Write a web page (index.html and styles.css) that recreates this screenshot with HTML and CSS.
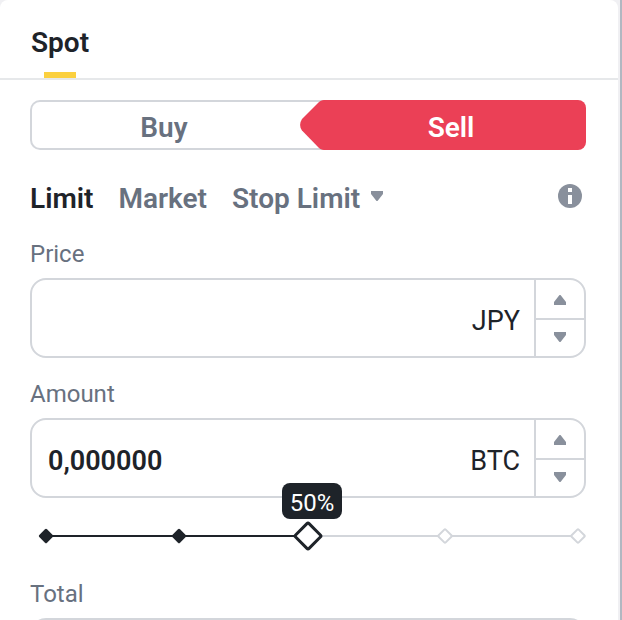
FILE: index.html
```html
<!DOCTYPE html>
<html lang="en">
<head>
  <meta charset="UTF-8" />
  <meta name="viewport" content="width=device-width, initial-scale=1.0"/>
  <title>Spot</title>
  <link rel="stylesheet" href="styles.css">
</head>
<body>
  <div class="panel">
    <!-- header -->
    <div class="panel-header">
      <button type="button" class="panel-tab">Spot</button>
    </div>

    <form class="order-form">
      <!-- buy / sell -->
      <div class="side-switch">
        <button type="button" class="side-buy">Buy</button>
        <button type="button" class="side-sell">
          <svg class="side-arrow" width="24" height="50" viewBox="0 0 24 50" aria-hidden="true"><path d="M24 0C21.500 0 20 1 18.500 2.500L2 19Q-1.800 25 2 30.500L18.500 47.500C20 49 21.500 50 24 50Z" fill="#eb4056"/></svg>
          <span class="side-label">Sell</span>
        </button>
      </div>

      <!-- order type -->
      <div class="order-types">
        <button type="button" class="type-btn active">Limit</button>
        <button type="button" class="type-btn">Market</button>
        <div class="type-menu">
          <select class="type-select" aria-label="Order type">
            <option>Stop Limit</option>
            <option>OCO</option>
          </select>
          <svg class="type-caret" width="12" height="10" viewBox="0 0 12 10" aria-hidden="true"><path d="M0 0h12v3L6.500 10h-1L0 3z" fill="#89909c"/></svg>
        </div>
        <button type="button" class="info-btn" aria-label="Info">
          <svg width="24" height="24" viewBox="0 0 24 24"><circle cx="12" cy="12" r="12" fill="#89909c"/><path d="M10 4h4v4h-4zM10 11h4v9h-4z" fill="#fff"/></svg>
        </button>
      </div>

      <!-- price -->
      <label class="field-label" for="price">Price</label>
      <div class="field">
        <input type="text" id="price" class="field-input">
        <span class="field-unit">JPY</span>
        <div class="stepper">
          <button type="button" class="step-btn" aria-label="Increase price"><svg width="12" height="10" viewBox="0 0 12 10"><path d="M5.500 0h1L12 7v3H0V7z" fill="#89909c"/></svg></button>
          <button type="button" class="step-btn" aria-label="Decrease price"><svg width="12" height="10" viewBox="0 0 12 10"><path d="M0 0h12v3L6.500 10h-1L0 3z" fill="#89909c"/></svg></button>
        </div>
      </div>

      <!-- amount -->
      <label class="field-label" for="amount">Amount</label>
      <div class="field">
        <input type="text" id="amount" class="field-input" value="0,000000">
        <span class="field-unit">BTC</span>
        <div class="stepper">
          <button type="button" class="step-btn" aria-label="Increase amount"><svg width="12" height="10" viewBox="0 0 12 10"><path d="M5.500 0h1L12 7v3H0V7z" fill="#89909c"/></svg></button>
          <button type="button" class="step-btn" aria-label="Decrease amount"><svg width="12" height="10" viewBox="0 0 12 10"><path d="M0 0h12v3L6.500 10h-1L0 3z" fill="#89909c"/></svg></button>
        </div>
      </div>

      <!-- percent slider -->
      <div class="slider">
        <div class="slider-line"></div>
        <div class="slider-ticks">
          <svg class="tick filled" viewBox="0 0 16 16"><rect x="3" y="3" width="10" height="10" rx="1" transform="rotate(45 8 8)"/></svg>
          <svg class="tick filled" viewBox="0 0 16 16"><rect x="3" y="3" width="10" height="10" rx="1" transform="rotate(45 8 8)"/></svg>
          <svg class="tick" viewBox="0 0 16 16"><rect x="3" y="3" width="10" height="10" rx="1" transform="rotate(45 8 8)"/></svg>
          <svg class="tick" viewBox="0 0 16 16"><rect x="3" y="3" width="10" height="10" rx="1" transform="rotate(45 8 8)"/></svg>
          <svg class="tick" viewBox="0 0 16 16"><rect x="3" y="3" width="10" height="10" rx="1" transform="rotate(45 8 8)"/></svg>
        </div>
        <input type="range" id="percent" class="slider-input" min="0" max="100" value="50" aria-label="Percent of balance">
        <output class="slider-tip" for="percent">50%</output>
      </div>

      <!-- total -->
      <label class="field-label" for="total">Total</label>
      <div class="field">
        <input type="text" id="total" class="field-input">
      </div>
    </form>
  </div>
</body>
</html>
```
FILE: styles.css
```css
* {
  box-sizing: border-box;
}
body {
  margin: 0;
  height: 100vh;
  overflow: hidden;
  background-color: #f0f0f3;
  border-right: 2px solid #b1b7c1;
  padding-right: 2px;
  font-family: Roboto, "Liberation Sans", sans-serif;
  font-size: 28px;
  color: #1e2329;
}
button, input, select {
  font: inherit;
  color: inherit;
  background: none;
  border: none;
  border-radius: 0;
  padding: 0;
  margin: 0;
  outline: none;
}
button {
  cursor: pointer;
}
svg {
  display: block;
}
.panel {
  background-color: #fff;
  border-radius: 8px 8px 0 0;
}
.panel-header {
  display: flex;
  height: 80px;
  padding: 0 30px;
  border-bottom: 2px solid #e6e8ea;
}
.panel-tab {
  display: flex;
  flex-direction: column;
  justify-content: space-between;
  align-items: center;
  min-width: 60px;
  padding-top: 27px;
  line-height: 32px;
  font-weight: 600;
}
.panel-tab::after {
  content: "";
  width: 32px;
  height: 6px;
  background-color: #fbd03f;
}
.order-form {
  padding: 20px 32px 20px 30px;
}
.side-switch {
  display: grid;
  grid-template-columns: 1fr 1fr;
  height: 50px;
  font-weight: 600;
}
.side-buy {
  margin-right: -16px;
  padding: 4px 28px 0 0;
  border: 2px solid #d3d6db;
  border-right: none;
  border-radius: 10px 0 0 10px;
  color: #68717f;
}
.side-sell {
  display: flex;
  margin-left: -8px;
  color: #fff;
}
.side-label {
  flex: 1;
  height: 50px;
  line-height: 56px;
  padding-right: 8px;
  border-radius: 0 8px 8px 0;
  background-color: #eb4056;
}
.order-types {
  display: flex;
  align-items: center;
  gap: 25px;
  height: 32px;
  margin: 32px 0 24px;
  font-weight: 600;
  color: #68717f;
}
.type-btn.active {
  color: #1e2329;
}
.type-menu {
  display: flex;
  align-items: center;
  gap: 10px;
}
.type-select {
  appearance: none;
  cursor: pointer;
}
.type-caret {
  margin-bottom: 4px;
}
.info-btn {
  margin-left: auto;
  margin-right: 4px;
  margin-bottom: 4px;
}
.field-label {
  display: block;
  font-size: 24px;
  line-height: 32px;
  margin-bottom: 8px;
  color: #68717f;
}
.field {
  display: flex;
  align-items: stretch;
  height: 80px;
  margin-bottom: 20px;
  border: 2px solid #d3d6db;
  border-radius: 16px;
  font-size: 27px;
}
.field-input {
  flex: 1;
  min-width: 0;
  padding: 6px 16px 0;
  font-weight: 600;
}
.field-unit {
  align-self: center;
  padding: 6px 14px 0 0;
}
.stepper {
  display: grid;
  grid-template-rows: 1fr 1fr;
  width: 50px;
  border-left: 2px solid #d3d6db;
}
.step-btn {
  display: flex;
  justify-content: center;
  align-items: center;
}
.step-btn:first-child {
  padding-top: 2px;
}
.step-btn:last-child {
  padding-bottom: 2px;
  border-top: 2px solid #d3d6db;
}
.slider {
  position: relative;
  display: grid;
  align-items: center;
  height: 36px;
  margin-bottom: 24px;
}
.slider-line, .slider-ticks, .slider-input {
  grid-area: 1 / 1;
}
.slider-line {
  height: 2px;
  margin: 0 8px 0 16px;
  background: linear-gradient(to right, #1e2329 50%, #d3d6db 50%);
}
.slider-ticks {
  display: flex;
  justify-content: space-between;
  padding-left: 8px;
}
.tick {
  width: 16px;
  height: 16px;
  fill: #fff;
  stroke: #d3d6db;
  stroke-width: 2;
}
.tick.filled {
  fill: #1e2329;
  stroke: #1e2329;
  stroke-width: 1;
}
.slider-input {
  appearance: none;
  width: 100%;
  height: 28px;
  cursor: pointer;
}
.slider-input::-webkit-slider-thumb {
  appearance: none;
  width: 22px;
  height: 22px;
  border: 3px solid #1e2329;
  border-radius: 3px;
  background-color: #fff;
  transform: rotate(45deg);
}
.slider-tip {
  position: absolute;
  left: 50%;
  bottom: 100%;
  width: 60px;
  margin: 0 0 -1px -26px;
  padding-top: 4px;
  border-radius: 8px;
  background-color: #1e2329;
  color: #fff;
  font-size: 24px;
  line-height: 32px;
  text-align: center;
}
```
